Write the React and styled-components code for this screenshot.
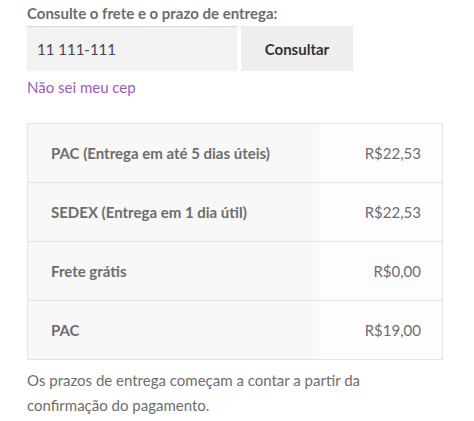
import React from "react";
import styled, { createGlobalStyle } from "styled-components";

const GlobalStyle = createGlobalStyle`
    body{
        margin: 0;
        background: #ffffff;
        font-family: "Source Sans Pro", Lato, "Open Sans", sans-serif;
        color: #6d6d6d;
    }
`

const shippingOptions = [
    { id: 1, title: 'PAC (Entrega em até 5 dias úteis)', price: 'R$22,53' },
    { id: 2, title: 'SEDEX (Entrega em 1 dia útil)', price: 'R$22,53' },
    { id: 3, title: 'Frete grátis', price: 'R$0,00' },
    { id: 4, title: 'PAC', price: 'R$19,00' },
]

const App = () => {
    return(
        <>
        <GlobalStyle/>
        <ShippingWrapper>
            <Label>Consulte o frete e o prazo de entrega:</Label>
            <Form>
                <CepInput defaultValue="11 111-111"/>
                <SubmitButton type="button">Consultar</SubmitButton>
            </Form>
            <CepLink href="#">Não sei meu cep</CepLink>
            <ShippingTable>
                <colgroup>
                    <col style={{ width: 291 }}/>
                    <col/>
                </colgroup>
                <tbody>
                {shippingOptions.map(option => (
                    <tr key={option.id}>
                        <th>{option.title}</th>
                        <td>{option.price}</td>
                    </tr>
                ))}
                </tbody>
            </ShippingTable>
            <Note>Os prazos de entrega começam a contar a partir da confirmação do pagamento.</Note>
        </ShippingWrapper>
        </>
    )
}

const ShippingWrapper = styled.section`
    padding: 3px 32px 0 27px;
    width: 415px;
`

const Label = styled.p`
    margin: 0;
    height: 23px;
    font-size: 15px;
    font-weight: 700;
    line-height: 20px;
    color: #6d6d6d;
`

const Form = styled.div`
    display: flex;
    gap: 4px;
`

const CepInput = styled.input`
    box-sizing: border-box;
    width: 210px;
    height: 45px;
    padding: 0 10px;
    border: 0;
    background-color: #f2f2f2;
    box-shadow: inset 0 1px 1px rgba(0,0,0,0.125);
    font-family: inherit;
    font-size: 15px;
    color: #43454b;
    outline: none;
`

const SubmitButton = styled.button`
    box-sizing: border-box;
    width: 112px;
    height: 45px;
    border: 0;
    background-color: #eeeeee;
    font-family: inherit;
    font-size: 15px;
    font-weight: 700;
    color: #333333;
`

const CepLink = styled.a`
    display: block;
    margin-top: 4px;
    height: 24px;
    line-height: 24px;
    font-size: 15px;
    color: #9a5cbf;
    text-decoration: none;
`

const ShippingTable = styled.table`
    margin-top: 24px;
    width: 416px;
    table-layout: fixed;
    border-collapse: collapse;
    border: 1px solid #e3e3e3;
    font-size: 15px;

    tr{
        height: 59px;
        border-top: 1px solid #e3e3e3;
    }

    th{
        padding: 0 0 0 23px;
        text-align: left;
        font-weight: 700;
        color: #6d6d6d;
        background-color: #f8f8f8;
        white-space: nowrap;
    }

    td{
        padding: 0 21px 0 0;
        text-align: right;
        color: #6d6d6d;
        background-color: #fdfdfd;
    }
`

const Note = styled.p`
    margin: 8px 0 0;
    font-size: 15px;
    line-height: 25px;
    color: #6d6d6d;
`

export default App;
